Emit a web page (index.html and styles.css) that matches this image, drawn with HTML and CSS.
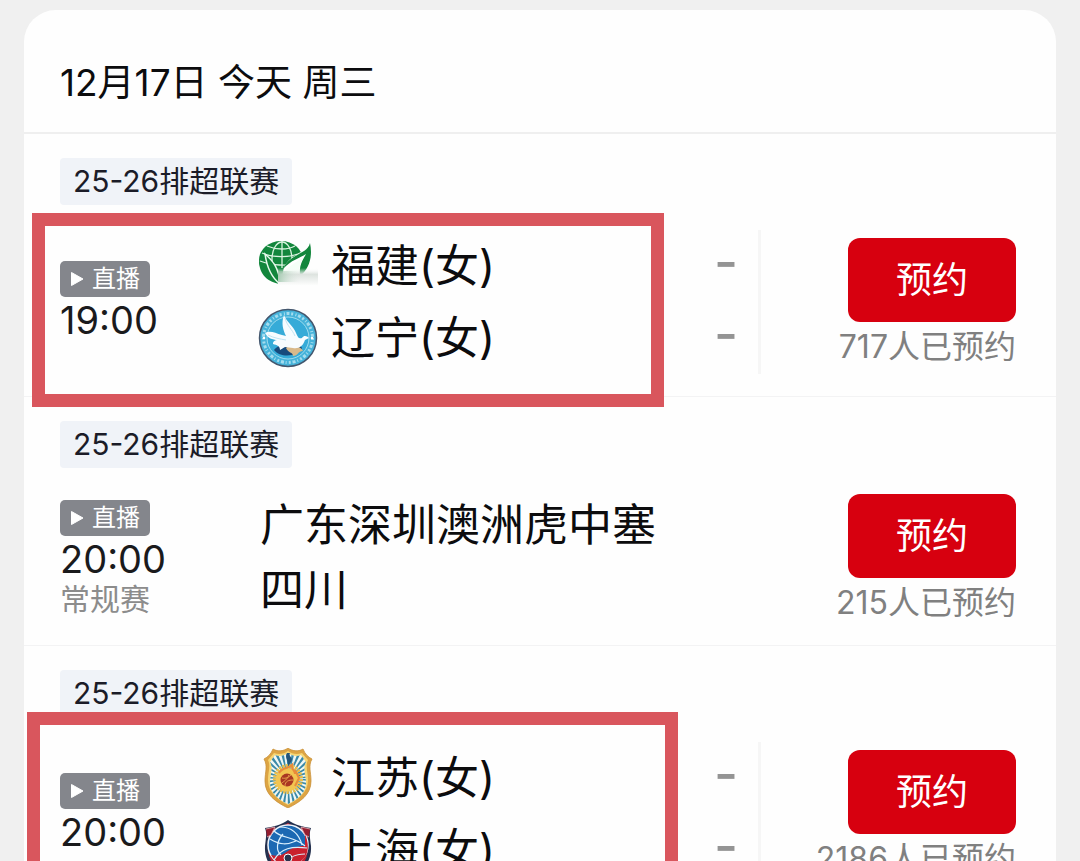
FILE: index.html
```html
<!DOCTYPE html>
<html lang="zh-CN">
<head>
  <meta charset="UTF-8">
  <meta name="viewport" content="width=device-width, initial-scale=1">
  <title>排超联赛赛程</title>
  <link rel="stylesheet" href="styles.css">
</head>
<body>
  <main class="card">
    <h1 class="date">12月17日 今天 周三</h1>

    <section class="match">
      <span class="league">25-26排超联赛</span>
      <div class="match-body">
        <div class="time-col">
          <span class="live"><svg class="play" viewBox="0 0 14 16"><path d="M1.500 1.500v13L13 8z"/></svg>直播</span>
          <time class="time">19:00</time>
        </div>
        <div class="teams">
          <div class="team">
            <svg class="logo" viewBox="0 0 60 60">
              <defs>
                <linearGradient id="fade" x1="0" y1="0" x2="0" y2="1">
                  <stop offset="0" stop-color="#fff" stop-opacity="0"/>
                  <stop offset="0.350" stop-color="#dde3df"/>
                  <stop offset="1" stop-color="#fff"/>
                </linearGradient>
                <linearGradient id="fadeLeft">
                  <stop offset="0" stop-color="#8fbf9f"/>
                  <stop offset="1" stop-color="#dfe8e2" stop-opacity="0"/>
                </linearGradient>
              </defs>
              <ellipse cx="23" cy="24" rx="22" ry="19" fill="#12863c"/>
              <path d="M1 25c0 13 9 22 22 23V28z" fill="#12863c"/>
              <g fill="none" stroke="#d9f3df" stroke-width="1.300">
                <ellipse cx="24" cy="23" rx="10" ry="17"/>
                <path d="M24 5v27M4 17c11 5 30 5 40-1M9 10c9 4 21 4 28 0M2 25c12 5 28 5 36 2"/>
              </g>
              <path d="M7 18c7 6 14 13 15 30-8-6-13-16-15-30z" fill="#12863c" stroke="#e8f9ec" stroke-width="1.500"/>
              <path d="M51 7C47 20 35 15 26 31l-3 14 15 1c12-7 18-23 13-39z" fill="#fff"/>
              <path d="M52 7c-3 12-20 10-27 26 8-9 17-11 23-15-3 6-7 10-6 22 9-7 13-19 10-33z" fill="#12863c"/>
              <path d="M26 36c5-6 12-10 20-15-4 6-5 10-5 17H26z" fill="#f4fff7"/>
              <path d="M20 32h40v18H20z" fill="url(#fade)"/>
              <path d="M20 35h22v11H20z" fill="url(#fadeLeft)" opacity="0.700"/>
            </svg>
            福建(女)
          </div>
          <div class="team">
            <svg class="logo" viewBox="0 0 60 60">
              <circle cx="30" cy="30" r="28.500" fill="#45b2d9" stroke="#43566d" stroke-width="1.500"/>
              <circle cx="30" cy="30" r="24.500" fill="none" stroke="#a4dcee" stroke-width="3" stroke-dasharray="2 2.300 1 1.700 3 1.800"/>
              <circle cx="30" cy="30" r="21" fill="#36abd8" stroke="#9edcee" stroke-width="1"/>
              <path d="M16 42c4-7 24-9 28-2-3 8-21 11-28 2z" fill="#174a7c"/>
              <path d="M28 40c5-4 9-3 11-1 3 0 5 2 6 4-5 0-5 5-10 5 0-4-5-3-7-8z" fill="#d8b98b"/>
              <path d="M7 25c5-3 10 0 17 2l4 1c-3-6-5-13-2-21 3 8 9 10 12 18 2 4 2 6 6 5 2-3 5-2 7 0l-4 2c-2 6-6 9-12 8l-8-1-5 3c0-4-3-5-7-6 0-3 2-4 5-4-6 0-10-2-13-7z" fill="#f7fcff"/>
              <path d="M27 10c2 8 7 11 10 18M10 27c6 3 12 4 18 5" fill="none" stroke="#c2e4f2" stroke-width="1"/>
              <circle cx="6" cy="30" r="1.300" fill="#fff"/><circle cx="54" cy="30" r="1.300" fill="#fff"/>
            </svg>
            辽宁(女)
          </div>
        </div>
        <div class="scores"><span>-</span><span>-</span></div>
        <div class="action">
          <button class="book" type="button">预约</button>
          <span class="count">717人已预约</span>
        </div>
      </div>
      <div class="frame"></div>
    </section>

    <section class="match">
      <span class="league">25-26排超联赛</span>
      <div class="match-body">
        <div class="time-col">
          <span class="live"><svg class="play" viewBox="0 0 14 16"><path d="M1.500 1.500v13L13 8z"/></svg>直播</span>
          <time class="time">20:00</time>
          <span class="stage">常规赛</span>
        </div>
        <p class="title">广东深圳澳洲虎中塞四川</p>
        <div class="action">
          <button class="book" type="button">预约</button>
          <span class="count">215人已预约</span>
        </div>
      </div>
    </section>

    <section class="match">
      <span class="league">25-26排超联赛</span>
      <div class="match-body">
        <div class="time-col">
          <span class="live"><svg class="play" viewBox="0 0 14 16"><path d="M1.500 1.500v13L13 8z"/></svg>直播</span>
          <time class="time">20:00</time>
        </div>
        <div class="teams">
          <div class="team">
            <svg class="logo" viewBox="0 0 60 60">
              <defs>
                <clipPath id="badge"><path d="M30 5c4 3 9 4 13 2l5 7c-3 5-1 11 0 19 1 11-8 18-18 23-10-5-19-12-18-23 1-8 3-14 0-19l5-7c4 2 9 1 13-2z"/></clipPath>
              </defs>
              <path d="M30 0c4 3 10 4 15 1 2 5 5 8 9 10-4 7-1 13-1 22 0 14-11 21-23 27C18 54 7 47 7 33c0-9 3-15-1-22 4-2 7-5 9-10 5 3 11 2 15-1z" fill="#dda443" stroke="#c99139" stroke-width="0.800"/>
              <path d="M30 3c4 3 9 4 14 2l6 7c-3 6 0 12 0 20 0 12-9 19-20 25-11-6-20-13-20-25 0-8 3-14 0-20l6-7c5 2 10 1 14-2z" fill="#f6d675"/>
              <g clip-path="url(#badge)">
                <path d="M8 0h44v60H8z" fill="#eef7f5"/>
                <circle cx="30" cy="31" r="20" fill="none" stroke="#3b89a8" stroke-width="22" stroke-dasharray="2 2.200"/>
                <circle cx="30" cy="31" r="12" fill="none" stroke="#e9bd4a" stroke-width="6" stroke-dasharray="2 1"/>
              </g>
              <path d="M29 5c-3 5 2 7 1 14l3-5c3-5-3-5-1-9z" fill="#24557a"/>
              <circle cx="29" cy="32" r="11.500" fill="#f2c551"/>
              <path d="M21 25c3-6 9-4 13-8-1 5 3 5 3 9M37 22l4 8-4 8" fill="none" stroke="#e98b3b" stroke-width="2"/>
              <circle cx="29" cy="32" r="6.500" fill="#a93722"/>
              <path d="M24 30c4 1 7-1 9-3M27 38c0-5 4-6 8-6M24 35c2-2 5-3 7-8" fill="none" stroke="#e6a04b" stroke-width="1"/>
            </svg>
            江苏(女)
          </div>
          <div class="team">
            <svg class="logo" viewBox="0 0 60 60">
              <path d="M30 0c7 5 15 7 23 8-2 5-1 10 0 18 1 17-10 27-23 34C17 53 6 43 7 26c1-8 2-13 0-18 8-1 16-3 23-8z" fill="#25314f"/>
              <path d="M30 3c6 4 13 6 20 7-2 6 0 11 0 17 0 15-9 24-20 30-11-6-20-15-20-30 0-6 2-11 0-17 7-1 14-3 20-7z" fill="#c4202f"/>
              <circle cx="30" cy="25" r="20" fill="#1c69b3" stroke="#edf5fc" stroke-width="1.500"/>
              <path d="M47 14c7 17 1 30-17 31-9 0-14-5-17-10 16 4 14-9 34-9z" fill="#c9202d"/>
              <path d="M16 11c8 8 20 5 31 15M12 19c10 6 17 6 26 2M22 7c12 0 19 7 22 18M16 40c7-12 18-14 33-12M30 45c0-8 8-11 17-11M25 14c-7 8-7 17-2 21" fill="none" stroke="#d9effd" stroke-width="1.200"/>
              <circle cx="30" cy="38" r="4" fill="#29344e" stroke="#fff" stroke-width="1"/>
              <path d="M8 9l9-2-4 8-4 2M52 9l-9-2 4 8 4 2" fill="#941e30" stroke="#efb5b7" stroke-width="0.800"/>
            </svg>
            上海(女)
          </div>
        </div>
        <div class="scores"><span>-</span><span>-</span></div>
        <div class="action">
          <button class="book" type="button">预约</button>
          <span class="count">2186人已预约</span>
        </div>
      </div>
      <div class="frame frame-wide"></div>
    </section>
  </main>
</body>
</html>
```
FILE: styles.css
```css
* {
  box-sizing: border-box;
}

body {
  margin: 0;
  padding: 10px 24px 0;
  background-color: #f0f0f0;
  font-family: Inter, "Noto Sans CJK SC", sans-serif;
  color: #0c0c0e;
}

.card {
  background-color: #fefefe;
  border-radius: 32px 32px 0 0;
}

.date {
  margin: 0;
  padding: 48px 36px 24px;
  border-bottom: 2px solid #efefef;
  font-size: 37px;
  font-weight: 400;
  line-height: 50px;
}

.match {
  position: relative;
  padding: 24px 40px 22px 36px;
}

.match + .match {
  border-top: 1px solid #f3f3f4;
}

.league {
  display: block;
  width: fit-content;
  padding: 0 13px;
  border-radius: 4px;
  background-color: #f0f3f8;
  color: #1b1c28;
  font-size: 30px;
  line-height: 47px;
}

.match-body {
  display: grid;
  grid-template-columns: 200px 1fr 67px 255px;
  align-items: center;
  margin-top: 25px;
}

.time-col {
  display: flex;
  flex-direction: column;
  align-items: flex-start;
}

.live {
  display: flex;
  align-items: center;
  gap: 8px;
  height: 36px;
  padding: 0 10px;
  border-radius: 5px;
  background-color: #84868c;
  color: #fff;
  font-size: 24px;
  line-height: 36px;
}

.play {
  width: 14px;
  height: 16px;
  fill: #fff;
  stroke: #fff;
  stroke-width: 1;
  stroke-linejoin: round;
}

.time {
  color: #1a1a1c;
  font-size: 38px;
  line-height: 46px;
}

.stage {
  color: #8c8c8c;
  font-size: 30px;
  line-height: 34px;
}

.team {
  display: flex;
  align-items: center;
  gap: 13px;
  font-size: 44px;
  line-height: 72px;
}

.logo {
  width: 60px;
  height: 60px;
  margin-left: -2px;
}

.title {
  margin: 0;
  font-size: 44px;
  line-height: 65px;
}

.scores {
  display: flex;
  flex-direction: column;
  gap: 8px;
  padding-bottom: 8px;
  border-right: 3px solid #f6f6f6;
  color: #949494;
  font-size: 52px;
  font-weight: 500;
  line-height: 64px;
  text-align: center;
}

.action {
  grid-column: 4;
  display: flex;
  flex-direction: column;
  align-items: flex-end;
}

.book {
  width: 168px;
  height: 84px;
  padding: 0 0 6px;
  border: none;
  border-radius: 12px;
  background-color: #d7000f;
  color: #fff;
  font-family: inherit;
  font-size: 36px;
  cursor: pointer;
}

.count {
  padding-top: 6px;
  color: #808080;
  font-size: 32px;
  line-height: 38px;
  white-space: nowrap;
}

/* red marker box drawn over a match */
.frame {
  position: absolute;
  top: 79px;
  left: 8px;
  right: 392px;
  height: 194px;
  border: 13px solid #d9565d;
  pointer-events: none;
  z-index: 1;
}

.frame-wide {
  top: 66px;
  left: 3px;
  right: 378px;
}
```
